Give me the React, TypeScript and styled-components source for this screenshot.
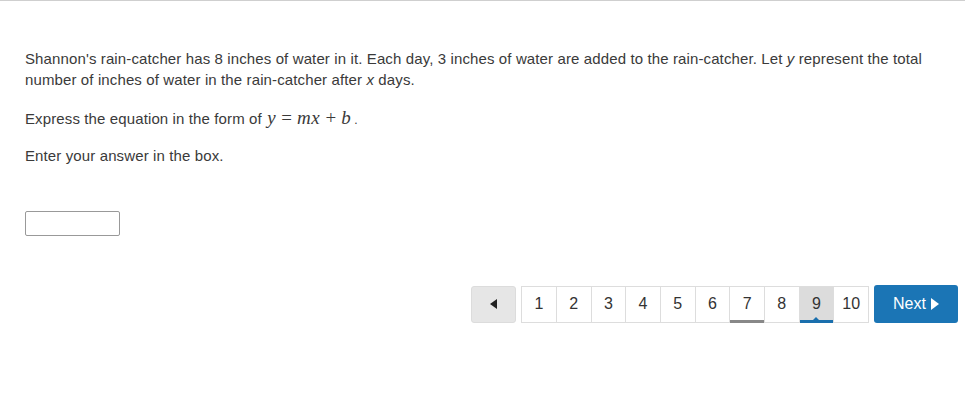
import styled, { createGlobalStyle } from 'styled-components';

const GlobalStyle = createGlobalStyle`
    body {
        margin: 0;
        background: #fff;
        font-family: "Liberation Sans", Arial, sans-serif;
        color: #333;
    }
`;

const pages = [1, 2, 3, 4, 5, 6, 7, 8, 9, 10];
const visited = [7];
const current = 9;

const App = () => {
    return (
        <Page>
            <GlobalStyle />
            <Question>
                <Para gap={18}>
                    Shannon's rain-catcher has 8 inches of water in it. Each day, 3 inches of water are added to the
                    rain-catcher. Let <i>y</i> represent the total number of inches of water in the rain-catcher after{' '}
                    <i>x</i> days.
                </Para>
                <Para gap={14}>
                    Express the equation in the form of{' '}
                    <MathExpr>
                        <MathVar>y</MathVar>
                        <MathOp>=</MathOp>
                        <MathVar>mx</MathVar>
                        <MathOp>+</MathOp>
                        <MathVar>b</MathVar>
                    </MathExpr>
                    <Dot>.</Dot>
                </Para>
                <Para gap={0}>Enter your answer in the box.</Para>
                <AnswerBox type="text" />
            </Question>
            <Pagination>
                <PrevButton aria-label="Previous">
                    <LeftArrow />
                </PrevButton>
                <PageGroup>
                    {pages.map((n) => (
                        <PageItem key={n} active={n === current}>
                            {n}
                            {visited.includes(n) && <VisitedBar />}
                            {n === current && <CurrentBar />}
                        </PageItem>
                    ))}
                </PageGroup>
                <NextButton>
                    Next
                    <RightArrow />
                </NextButton>
            </Pagination>
        </Page>
    );
};

const Page = styled.div`
    width: 965px;
    height: 404px;
    border-top: 1px solid #cfcfcf;
    box-sizing: border-box;
`;

const Question = styled.div`
    padding: 47px 25px 0 25px;
    width: 915px;
`;

const Para = styled.p`
    margin: 0 0 ${(p) => p.gap}px 0;
    font-size: 15px;
    letter-spacing: 0.12px;
    line-height: 21px;
    color: #3a3a3a;
`;

const MathExpr = styled.span`
    font-family: "Liberation Serif", "Times New Roman", serif;
    font-size: 19px;
    line-height: 0;
    margin-left: 1px;
`;

const MathVar = styled.span`
    font-style: italic;
    letter-spacing: 0.6px;
`;

const MathOp = styled.span`
    margin: 0 5px;
`;

const Dot = styled.span`
    margin-left: 3px;
    font-size: 12px;
`;

const AnswerBox = styled.input`
    display: block;
    margin-top: 45px;
    width: 95px;
    height: 25px;
    box-sizing: border-box;
    border: 1px solid #999;
    border-radius: 2px;
    outline: none;
`;

const Pagination = styled.div`
    display: flex;
    justify-content: flex-end;
    align-items: center;
    gap: 5px;
    margin-top: 49px;
    padding-right: 7px;
`;

const PrevButton = styled.button`
    width: 45px;
    height: 37px;
    background: #e6e6e6;
    border: 1px solid #dcdcdc;
    border-radius: 3px;
    display: flex;
    align-items: center;
    justify-content: center;
    padding: 0;
`;

const LeftArrow = styled.span`
    width: 0;
    height: 0;
    border-top: 5px solid transparent;
    border-bottom: 5px solid transparent;
    border-right: 7px solid #222;
`;

const RightArrow = styled.span`
    width: 0;
    height: 0;
    margin-left: 5px;
    border-top: 6px solid transparent;
    border-bottom: 6px solid transparent;
    border-left: 8px solid #fff;
`;

const PageGroup = styled.div`
    display: flex;
    border: 1px solid #ddd;
    border-left: none;
    height: 37px;
    box-sizing: border-box;
`;

const PageItem = styled.div`
    position: relative;
    width: 34.7px;
    box-sizing: border-box;
    border-left: 1px solid #ddd;
    display: flex;
    align-items: center;
    justify-content: center;
    font-size: 16px;
    color: #333;
    background: ${(p) => (p.active ? '#dcdcdc' : '#fff')};
`;

const VisitedBar = styled.span`
    position: absolute;
    left: 0;
    right: 0;
    bottom: -1px;
    height: 3px;
    background: #888;
`;

const CurrentBar = styled.span`
    position: absolute;
    left: 0;
    right: 0;
    bottom: -1px;
    height: 3px;
    background: #1a6fad;

    &::after {
        content: '';
        position: absolute;
        left: 50%;
        top: -3px;
        margin-left: -3px;
        border-left: 3px solid transparent;
        border-right: 3px solid transparent;
        border-bottom: 3px solid #1a6fad;
    }
`;

const NextButton = styled.button`
    width: 84px;
    height: 38px;
    background: #1b75b5;
    color: #fff;
    border: none;
    border-radius: 3px;
    font-family: "Liberation Sans", Arial, sans-serif;
    font-size: 16px;
    display: flex;
    align-items: center;
    justify-content: center;
    padding: 0;
`;

export default App;
